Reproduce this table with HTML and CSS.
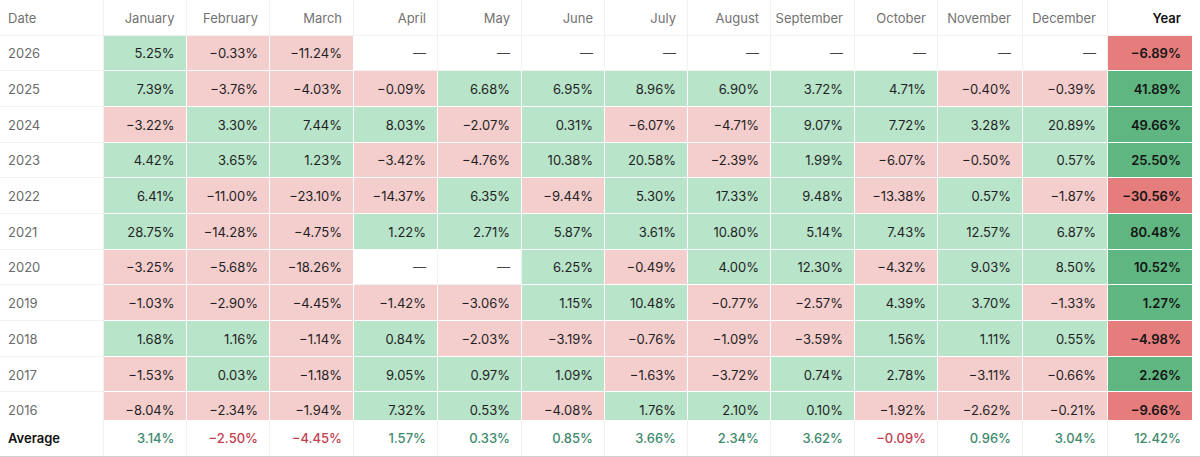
FILE: index.html
```html
<!DOCTYPE html>
<html>
<head>
<meta charset="utf-8">
<link rel="stylesheet" href="styles.css">
</head>
<body>
<div class="scroller">
<table class="returns">
<colgroup>
<col class="c-date"><col class="c-jan"><col class="c-feb"><col class="c-m"><col class="c-m"><col class="c-m"><col class="c-s"><col class="c-s"><col class="c-s"><col class="c-m"><col class="c-s"><col class="c-w"><col class="c-w"><col class="c-w">
</colgroup>
<thead>
<tr><th class="date">Date</th><th>January</th><th>February</th><th>March</th><th>April</th><th>May</th><th>June</th><th>July</th><th>August</th><th>September</th><th>October</th><th>November</th><th>December</th><th class="year">Year</th></tr>
</thead>
<tbody>
<tr><td class="date">2026</td><td class="pos">5.25%</td><td class="neg">−0.33%</td><td class="neg">−11.24%</td><td class="none">—</td><td class="none">—</td><td class="none">—</td><td class="none">—</td><td class="none">—</td><td class="none">—</td><td class="none">—</td><td class="none">—</td><td class="none">—</td><td class="yneg">−6.89%</td></tr>
<tr><td class="date">2025</td><td class="pos">7.39%</td><td class="neg">−3.76%</td><td class="neg">−4.03%</td><td class="neg">−0.09%</td><td class="pos">6.68%</td><td class="pos">6.95%</td><td class="pos">8.96%</td><td class="pos">6.90%</td><td class="pos">3.72%</td><td class="pos">4.71%</td><td class="neg">−0.40%</td><td class="neg">−0.39%</td><td class="ypos">41.89%</td></tr>
<tr><td class="date">2024</td><td class="neg">−3.22%</td><td class="pos">3.30%</td><td class="pos">7.44%</td><td class="pos">8.03%</td><td class="neg">−2.07%</td><td class="pos">0.31%</td><td class="neg">−6.07%</td><td class="neg">−4.71%</td><td class="pos">9.07%</td><td class="pos">7.72%</td><td class="pos">3.28%</td><td class="pos">20.89%</td><td class="ypos">49.66%</td></tr>
<tr><td class="date">2023</td><td class="pos">4.42%</td><td class="pos">3.65%</td><td class="pos">1.23%</td><td class="neg">−3.42%</td><td class="neg">−4.76%</td><td class="pos">10.38%</td><td class="pos">20.58%</td><td class="neg">−2.39%</td><td class="pos">1.99%</td><td class="neg">−6.07%</td><td class="neg">−0.50%</td><td class="pos">0.57%</td><td class="ypos">25.50%</td></tr>
<tr><td class="date">2022</td><td class="pos">6.41%</td><td class="neg">−11.00%</td><td class="neg">−23.10%</td><td class="neg">−14.37%</td><td class="pos">6.35%</td><td class="neg">−9.44%</td><td class="pos">5.30%</td><td class="pos">17.33%</td><td class="pos">9.48%</td><td class="neg">−13.38%</td><td class="pos">0.57%</td><td class="neg">−1.87%</td><td class="yneg">−30.56%</td></tr>
<tr><td class="date">2021</td><td class="pos">28.75%</td><td class="neg">−14.28%</td><td class="neg">−4.75%</td><td class="pos">1.22%</td><td class="pos">2.71%</td><td class="pos">5.87%</td><td class="pos">3.61%</td><td class="pos">10.80%</td><td class="pos">5.14%</td><td class="pos">7.43%</td><td class="pos">12.57%</td><td class="pos">6.87%</td><td class="ypos">80.48%</td></tr>
<tr><td class="date">2020</td><td class="neg">−3.25%</td><td class="neg">−5.68%</td><td class="neg">−18.26%</td><td class="none">—</td><td class="none">—</td><td class="pos">6.25%</td><td class="neg">−0.49%</td><td class="pos">4.00%</td><td class="pos">12.30%</td><td class="neg">−4.32%</td><td class="pos">9.03%</td><td class="pos">8.50%</td><td class="ypos">10.52%</td></tr>
<tr><td class="date">2019</td><td class="neg">−1.03%</td><td class="neg">−2.90%</td><td class="neg">−4.45%</td><td class="neg">−1.42%</td><td class="neg">−3.06%</td><td class="pos">1.15%</td><td class="pos">10.48%</td><td class="neg">−0.77%</td><td class="neg">−2.57%</td><td class="pos">4.39%</td><td class="pos">3.70%</td><td class="neg">−1.33%</td><td class="ypos">1.27%</td></tr>
<tr><td class="date">2018</td><td class="pos">1.68%</td><td class="pos">1.16%</td><td class="neg">−1.14%</td><td class="pos">0.84%</td><td class="neg">−2.03%</td><td class="neg">−3.19%</td><td class="neg">−0.76%</td><td class="neg">−1.09%</td><td class="neg">−3.59%</td><td class="pos">1.56%</td><td class="pos">1.11%</td><td class="pos">0.55%</td><td class="yneg">−4.98%</td></tr>
<tr><td class="date">2017</td><td class="neg">−1.53%</td><td class="pos">0.03%</td><td class="neg">−1.18%</td><td class="pos">9.05%</td><td class="pos">0.97%</td><td class="pos">1.09%</td><td class="neg">−1.63%</td><td class="neg">−3.72%</td><td class="pos">0.74%</td><td class="pos">2.78%</td><td class="neg">−3.11%</td><td class="neg">−0.66%</td><td class="ypos">2.26%</td></tr>
<tr><td class="date">2016</td><td class="neg">−8.04%</td><td class="neg">−2.34%</td><td class="neg">−1.94%</td><td class="pos">7.32%</td><td class="pos">0.53%</td><td class="neg">−4.08%</td><td class="pos">1.76%</td><td class="pos">2.10%</td><td class="pos">0.10%</td><td class="neg">−1.92%</td><td class="neg">−2.62%</td><td class="neg">−0.21%</td><td class="yneg">−9.66%</td></tr>
</tbody>
<tfoot>
<tr><td class="date avg-label">Average</td><td class="apos">3.14%</td><td class="aneg">−2.50%</td><td class="aneg">−4.45%</td><td class="apos">1.57%</td><td class="apos">0.33%</td><td class="apos">0.85%</td><td class="apos">3.66%</td><td class="apos">2.34%</td><td class="apos">3.62%</td><td class="aneg">−0.09%</td><td class="apos">0.96%</td><td class="apos">3.04%</td><td class="apos">12.42%</td></tr>
</tfoot>
</table>
</div>
</body>
</html>
```

FILE: styles.css
```css
html, body {
  margin: 0;
  padding: 0;
  background: #ffffff;
}

body {
  font-family: Inter, "Noto Sans", "Liberation Sans", sans-serif;
  font-size: 13px;
  color: #1f1f1f;
}

.scroller {
  width: 1200px;
  height: 456px;
  overflow: hidden;
  border-bottom: 1px solid #cfcfcf;
}

.returns {
  width: 1193px;
  table-layout: fixed;
  border-collapse: separate;
  border-spacing: 0;
}

.c-date { width: 104px; }
.c-jan { width: 82.5px; }
.c-feb { width: 83.5px; }
.c-m { width: 84px; }
.c-s { width: 83px; }
.c-w { width: 85px; }

.returns th,
.returns td {
  text-align: right;
  padding: 0 11px 0 4px;
  border-right: 1px solid #f1f1f1;
  border-bottom: 1px solid #f1f1f1;
  white-space: nowrap;
  box-sizing: border-box;
}

.returns thead th {
  height: 35.5px;
  padding-top: 1px;
  font-weight: 400;
  color: #727272;
}

.returns thead th.year {
  font-weight: 600;
  color: #111111;
  border-right-color: #ffffff;
}

.returns tbody td {
  height: 35.7px;
  padding-top: 1px;
}

.returns .date {
  text-align: left;
  padding-left: 8px;
  color: #6b6b6b;
}

.returns thead .date {
  color: #727272;
}

.returns td.pos {
  background: #b8e4ca;
  border-color: #ffffff;
}

.returns td.neg {
  background: #f4cdcd;
  border-color: #ffffff;
}

.returns td.none {
  color: #444444;
}

.returns td.ypos {
  background: #5fb680;
  border-color: #ffffff;
  font-weight: 600;
  color: #141414;
}

.returns td.yneg {
  background: #e57d7d;
  border-color: #ffffff;
  font-weight: 600;
  color: #141414;
}

.returns tfoot td {
  position: sticky;
  bottom: 0;
  background: #ffffff;
  height: 36px;
  padding-top: 0;
  border-bottom: none;
  font-weight: 500;
}

.returns tfoot td:last-child {
  border-right-color: #ffffff;
}

.returns tfoot .avg-label {
  font-weight: 600;
  color: #111111;
}

.returns td.apos {
  color: #3f8a6e;
}

.returns td.aneg {
  color: #c2404f;
}
```
